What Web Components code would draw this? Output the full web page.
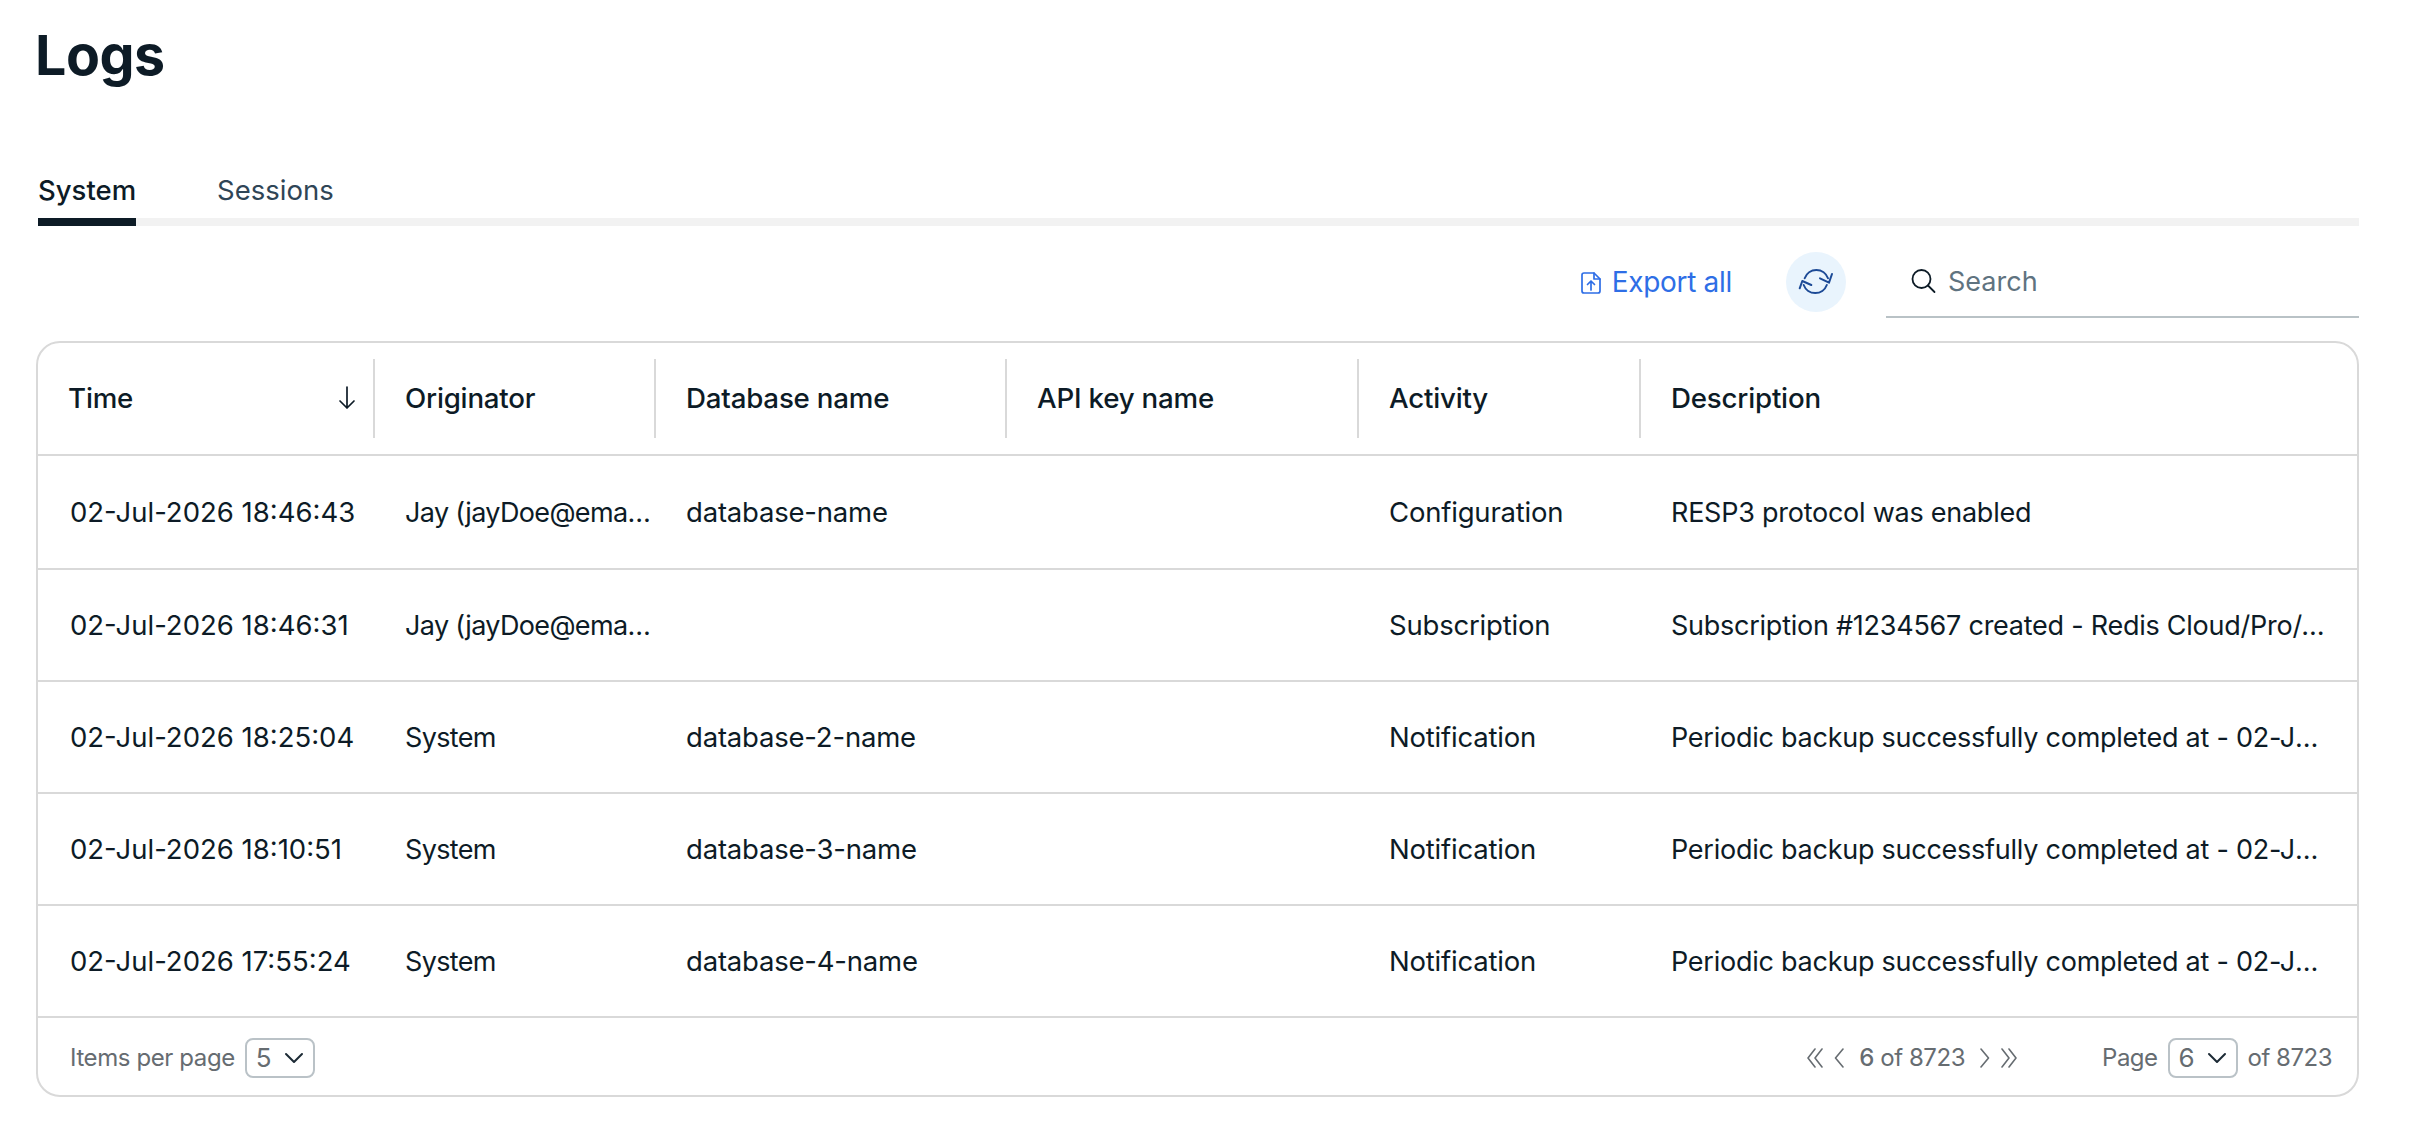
<!DOCTYPE html>
<html lang="en"><head><meta charset="utf-8"><title>Logs</title>
<style>
html,body{margin:0;background:#fff;}
body{font-family:Inter,"Liberation Sans",sans-serif;color:#0d1b26;}
</style></head><body>
<logs-page></logs-page>
<script>
const S='fill="none" stroke="currentColor" stroke-linecap="round" stroke-linejoin="round"';
const chev=(d)=>`<svg width="18" height="22" viewBox="0 0 18 22" ${S} stroke-width="1.6"><path d="${d}"/></svg>`;
const icons={
 down:`<svg width="22" height="26" viewBox="0 0 22 26" ${S} stroke-width="1.7"><path d="M11 2v21M4 16l7 7 7-7"/></svg>`,
 export:`<svg width="22" height="24" viewBox="0 0 22 24" ${S} stroke-width="1.7"><path d="M4 2h10l6 6v12a2 2 0 0 1-2 2H4a2 2 0 0 1-2-2V4a2 2 0 0 1 2-2z"/><path d="M14 2v6h6"/><path d="M11 19v-9M7.500 13.500 11 10l3.500 3.500"/></svg>`,
 refresh:`<svg width="36" height="28" viewBox="-1 -1 36 28" ${S} stroke-width="2"><path d="M5.700 9.300A12.300 12.300 0 0 1 29 9.300"/><path d="M21 9.300l9 4.400L33 5"/><path d="M27.800 16A12.300 12.300 0 0 1 4.700 16"/><path d="M12.300 16 3.300 12 .7 19.300"/></svg>`,
 search:`<svg width="26" height="26" viewBox="0 0 26 26" ${S} stroke-width="1.800" style="color:#0d1b26"><circle cx="11.500" cy="11" r="9"/><path d="M18 17.500l6.500 6.500"/></svg>`,
 sel:`<svg width="20" height="12" viewBox="0 0 20 12" ${S} stroke-width="2" style="color:#1c2a35"><path d="M2 2l8 8 8-8"/></svg>`,
 dl:chev("M9 2l-7 9 7 9M16 2l-7 9 7 9"), l:`<svg width="10" height="22" viewBox="0 0 10 22" ${S} stroke-width="1.600"><path d="M9 2 1.500 11 9 20"/></svg>`,
 r:`<svg width="10" height="22" viewBox="0 0 10 22" ${S} stroke-width="1.600"><path d="M1 2l7.500 9L1 20"/></svg>`, dr:chev("M2 2l7 9-7 9M9 2l7 9-7 9")
};
const tpl=(html)=>{const t=document.createElement('template');t.innerHTML=html;return t;};
class Base extends HTMLElement{
 connectedCallback(){ if(!this.shadowRoot){this.attachShadow({mode:'open'}).appendChild(this.constructor.t.content.cloneNode(true));this.init&&this.init();} }
}
class LogTabs extends Base{ static t=tpl(`<style>
:host{display:flex;gap:81px;height:54px;box-sizing:border-box;border-bottom:8px solid #f2f2f2;font-size:27.500px;align-items:flex-start}
div{height:54px;box-sizing:border-box;line-height:36px;color:#2f4556}
.a{color:#0d1b26;font-weight:500;border-bottom:8px solid #0d1b26;padding-bottom:10px}
</style><div class="a">System</div><div>Sessions</div>`);}
class LogToolbar extends Base{ static t=tpl(`<style>
:host{display:flex;justify-content:flex-end;align-items:center;height:72px}
a{display:flex;align-items:center;gap:10px;color:#2e6ee6;font:400 28px Inter,sans-serif;letter-spacing:-.3px}
a svg{margin-top:1px}
button{all:unset;width:60px;height:60px;border-radius:50%;background:#e9f4fd;color:#1c4a96;display:flex;align-items:center;justify-content:center;margin:0 40px 0 54px}
.s{width:473px;height:72px;box-sizing:border-box;border-bottom:2px solid #b9c2c6;display:flex;align-items:center;gap:12px;padding-left:24px;color:#5f7380;font-size:27px}
</style><a>${icons.export}<span>Export all</span></a><button>${icons.refresh}</button><div class="s">${icons.search}<span>Search</span></div>`);}
class LogSelect extends Base{ static t=tpl(`<style>
:host{display:inline-flex;align-items:center;justify-content:space-between;box-sizing:border-box;height:40px;width:var(--w,70px);padding:0 9px 0 9px;border:2px solid #bac2c7;border-radius:8px;font-size:26px;color:#666c71}
</style><slot></slot>${icons.sel}`);}
const COLS='337px 281px 351px 352px 282px minmax(0,1fr)';
class LogHead extends Base{ static t=tpl(`<style>
:host{display:grid;grid-template-columns:${COLS};height:113px;box-sizing:border-box;border-bottom:2px solid #d9d9d9;align-items:center;font-size:27.700px;font-weight:500;color:#0d1b26;letter-spacing:-.2px}
div{height:79px;box-sizing:border-box;border-right:2px solid #d9d9d9;display:flex;align-items:center;justify-content:space-between;padding:0 15px 2px 30px}
div:first-child{padding-left:32px}
div:last-child{border:0}
</style><div>Time ${icons.down}</div><div>Originator</div><div>Database name</div><div>API key name</div><div>Activity</div><div>Description</div>`);}
class LogRow extends Base{ static t=tpl(`<style>
:host{display:grid;grid-template-columns:${COLS};align-items:center;height:112px;box-sizing:border-box;border-bottom:2px solid #d9d9d9;font-size:27.500px;color:#0d1b26;letter-spacing:-.2px}
:host(:first-child){height:114px}
span{display:block;padding:0 4px 0 30px;white-space:nowrap;overflow:hidden;text-overflow:ellipsis;min-width:0}
#a{padding-left:32px;letter-spacing:0}
#b{padding-right:0;font-size:27px;letter-spacing:-.65px}
#f{padding-right:32px;font-size:27px;letter-spacing:-.25px}
</style><span id="a"></span><span id="b"></span><span id="c"></span><span id="d"></span><span id="e"></span><span id="f"></span>`);
 init(){ for(const k of 'abcdef'){ this.shadowRoot.getElementById(k).textContent=this.getAttribute(k)||''; } } }
class LogFooter extends Base{ static t=tpl(`<style>
:host{display:flex;align-items:center;justify-content:space-between;height:77px;padding:2px 25px 0 32px;box-sizing:border-box;font-size:24px;color:#666c71;letter-spacing:-.4px}
.g{display:flex;align-items:center}
.n{gap:10px;margin-right:84px}
b{font-weight:500;}
.n span{margin:0 5px;letter-spacing:-.45px}
.p{gap:10px;letter-spacing:-.5px}
</style><div class="g" style="gap:10px">Items per page <log-select>5</log-select></div>
<div class="g"><div class="g n">${icons.dl}${icons.l}<span><b>6</b> of 8723</span>${icons.r}${icons.dr}</div><div class="g p">Page <log-select style="--w:70px">6</log-select> of 8723</div></div>`);}
class LogTable extends Base{ static t=tpl(`<style>
:host{display:block;border:2px solid #d9d9d9;border-radius:24px;overflow:hidden}
</style><log-head></log-head><slot></slot><log-footer></log-footer>`);}
class LogsPage extends Base{ static t=tpl(`<style>
:host{display:block;padding:0 55px 0 38px}
h1{margin:0 0 0 -3px;height:172px;box-sizing:border-box;padding-top:22px;font-size:55.500px;line-height:66px;font-weight:700;color:#0d1b26;letter-spacing:-.5px}
log-table{margin-left:-2px;margin-top:23px}
log-toolbar{margin-top:20px}
</style><h1>Logs</h1><log-tabs></log-tabs><log-toolbar></log-toolbar><log-table></log-table>`);
 init(){const rows=[
 ['02-Jul-2026 18:46:43','Jay (jayDoe@email.com)','database-name','','Configuration','RESP3 protocol was enabled'],
 ['02-Jul-2026 18:46:31','Jay (jayDoe@email.com)','','','Subscription','Subscription #1234567 created - Redis Cloud/Pro/AWS/us-east-1'],
 ['02-Jul-2026 18:25:04','System','database-2-name','','Notification','Periodic backup successfully completed at - 02-Jul-2026 18:25:04'],
 ['02-Jul-2026 18:10:51','System','database-3-name','','Notification','Periodic backup successfully completed at - 02-Jul-2026 18:10:51'],
 ['02-Jul-2026 17:55:24','System','database-4-name','','Notification','Periodic backup successfully completed at - 02-Jul-2026 17:55:24']];
 const tb=this.shadowRoot.querySelector('log-table');
 for(const r of rows){const e=document.createElement('log-row');'abcdef'.split('').forEach((k,i)=>e.setAttribute(k,r[i]));tb.appendChild(e);}
 }}
customElements.define('log-tabs',LogTabs);customElements.define('log-toolbar',LogToolbar);customElements.define('log-select',LogSelect);
customElements.define('log-head',LogHead);customElements.define('log-row',LogRow);customElements.define('log-footer',LogFooter);
customElements.define('log-table',LogTable);customElements.define('logs-page',LogsPage);
</script></body></html>
